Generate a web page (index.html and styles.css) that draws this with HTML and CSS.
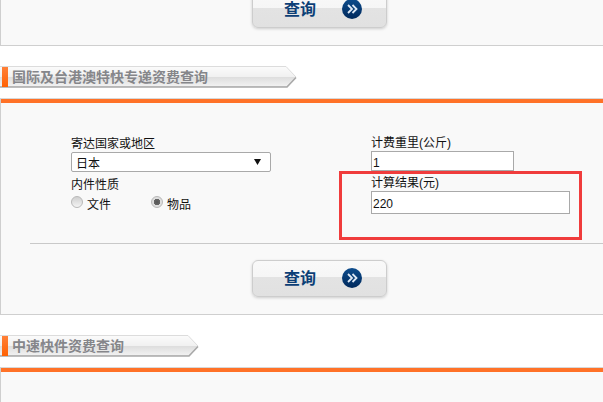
FILE: index.html
```html
<!DOCTYPE html>
<html>
<head>
   <title>资费查询</title>
   <link rel="stylesheet" href="styles.css">
</head>
<body>
   <svg class="defs" width="0" height="0">
       <defs>
           <linearGradient id="ribbon" x1="0" y1="0" x2="0" y2="1">
               <stop offset="0" stop-color="#fbfbfb"/>
               <stop offset="0.5" stop-color="#f1f1f1"/>
               <stop offset="0.55" stop-color="#dedede"/>
               <stop offset="1" stop-color="#f2f2f2"/>
           </linearGradient>
           <linearGradient id="ball" x1="0" y1="0" x2="0" y2="1">
               <stop offset="0" stop-color="#0d4c8c"/>
               <stop offset="1" stop-color="#00295c"/>
           </linearGradient>
       </defs>
   </svg>

   <div class="panel panel-top">
       <button class="query-btn">
           <span class="query-text">查询</span>
           <svg class="query-icon" width="20" height="20" viewBox="0 0 20 20">
               <circle cx="10" cy="10" r="10" fill="url(#ball)"/>
               <path d="M6 6l4 4-4 4M10.500 6l4 4-4 4" fill="none" stroke="#dfe9f5" stroke-width="1.800"/>
           </svg>
       </button>
   </div>

   <div class="section-head">
       <svg class="ribbon" width="297" height="22" viewBox="0 0 297 22">
           <path d="M-1 .5H286L296 11 287 20.500H-1Z" fill="url(#ribbon)" stroke="#dcdcdc"/>
           <path d="M-1 21H287L296 11.500" fill="none" stroke="#a9a9a9" stroke-width="1.600"/>
       </svg>
       <span class="section-mark"></span>
       <h2 class="section-title">国际及台港澳特快专递资费查询</h2>
   </div>

   <div class="panel panel-form">
       <div class="form-row">
           <div class="form-col form-col-left">
               <label class="field-label">寄达国家或地区</label>
               <div class="select-box">
                   <span>日本</span>
                   <svg width="7" height="6" viewBox="0 0 7 6"><path d="M0 0H7L3.500 6Z" fill="#111"/></svg>
               </div>
               <label class="field-label field-label-second">内件性质</label>
               <div class="radio-row">
                   <label class="radio-item"><input type="radio" name="kind" class="radio">文件</label>
                   <label class="radio-item"><input type="radio" name="kind" class="radio" checked>物品</label>
               </div>
           </div>
           <div class="form-col">
               <label class="field-label field-label-tight">计费重里(公斤)</label>
               <input type="text" class="text-input text-input-short" value="1">
               <label class="field-label field-label-result">计算结果(元)</label>
               <input type="text" class="text-input text-input-long" value="220">
           </div>
       </div>
       <div class="form-line"></div>
       <div class="btn-row">
           <button class="query-btn">
               <span class="query-text">查询</span>
               <svg class="query-icon" width="20" height="20" viewBox="0 0 20 20">
                   <circle cx="10" cy="10" r="10" fill="url(#ball)"/>
                   <path d="M6 6l4 4-4 4M10.500 6l4 4-4 4" fill="none" stroke="#dfe9f5" stroke-width="1.800"/>
               </svg>
           </button>
       </div>
       <div class="red-box"></div>
   </div>

   <div class="section-head">
       <svg class="ribbon" width="199" height="22" viewBox="0 0 199 22">
           <path d="M-1 .5H188L198 11 189 20.500H-1Z" fill="url(#ribbon)" stroke="#dcdcdc"/>
           <path d="M-1 21H189L198 11.500" fill="none" stroke="#a9a9a9" stroke-width="1.600"/>
       </svg>
       <span class="section-mark"></span>
       <h2 class="section-title">中速快件资费查询</h2>
   </div>

   <div class="panel panel-last"></div>
</body>
</html>
```

FILE: styles.css
```css
* {
    margin: 0;
    padding: 0;
    box-sizing: border-box;
}

html, body {
    height: 402px;
    overflow: hidden;
}

body {
    font-family: "Liberation Sans", "Noto Sans CJK SC", sans-serif;
    font-size: 12px;
    color: #111;
    background: #fff;
}

.defs {
    display: block;
    height: 0;
}

.panel {
    background: #f9f9f9;
    border-left: 1px solid #cfcfcf;
}

.panel-top {
    height: 46px;
    border-bottom: 1px solid #cfcfcf;
    padding: 0 0 17px 251px;
    display: flex;
    align-items: flex-end;
}

.panel-form {
    position: relative;
    height: 217px;
    border-top: 1px solid #d8d8d8;
    border-bottom: 1px solid #cfcfcf;
}

.panel-form::before,
.panel-last::before {
    content: "";
    display: block;
    height: 4px;
    background: #ff7228;
}

.panel-last {
    height: 36px;
    border-top: 1px solid #d8d8d8;
}

.section-head {
    position: relative;
    height: 22px;
    margin: 20px 0 10px;
    display: flex;
    align-items: center;
}

.ribbon {
    position: absolute;
    left: 0;
    top: 0;
}

.section-mark {
    position: relative;
    width: 6px;
    height: 20px;
    margin: -1px 4px 0 2px;
    background: linear-gradient(#ff8038, #ff6204);
}

.section-title {
    position: relative;
    font-size: 14px;
    font-weight: 700;
    line-height: 22px;
    color: #85868a;
}

.form-row {
    display: flex;
    padding: 33px 0 0 70px;
    height: 140px;
}

.form-col {
    display: flex;
    flex-direction: column;
    align-items: flex-start;
}

.form-col-left {
    width: 300px;
}

.field-label {
    display: block;
    line-height: 16px;
}

.field-label-tight {
    height: 15px;
    line-height: 14px;
}

.field-label-second {
    margin-top: 5px;
}

.field-label-result {
    margin-top: 4px;
}

.select-box {
    width: 200px;
    height: 20px;
    padding: 0 9px 0 4px;
    display: flex;
    align-items: center;
    justify-content: space-between;
    background: #fff;
    border: 1px solid #a9a9a9;
    border-radius: 2px;
}

.radio-row {
    display: flex;
    margin-top: 3px;
}

.radio-item {
    width: 80px;
    display: flex;
    align-items: center;
    gap: 4px;
    line-height: 18px;
}

.radio {
    appearance: none;
    -webkit-appearance: none;
    width: 12px;
    height: 12px;
    margin-bottom: 6px;
    border: 1px solid #b8b8b8;
    border-radius: 50%;
    background: linear-gradient(#cfcfcf, #f4f4f4);
}

.radio:checked {
    background: radial-gradient(circle, #555 0, #666 3px, #dedede 3.500px);
}

.text-input {
    display: block;
    height: 20px;
    padding: 3px 1px 0;
    border: 1px solid #a9a9a9;
    background: #fff;
    font-family: "Liberation Sans", sans-serif;
    font-size: 12px;
    color: #111;
    outline: none;
}

.text-input-short {
    width: 143px;
}

.text-input-long {
    width: 199px;
    height: 23px;
}

.form-line {
    height: 1px;
    margin: 0 0 0 29px;
    background: #c9c9c9;
}

.btn-row {
    padding: 16px 0 0 251px;
}

.query-btn {
    width: 135px;
    height: 37px;
    display: flex;
    align-items: center;
    padding: 0 24px 0 31px;
    justify-content: space-between;
    border: 1px solid #cdcdcd;
    border-radius: 6px;
    background: linear-gradient(#f9f9f9 0, #f6f6f6 45%, #e3e3e3 46%, #e1e1e1 100%);
    box-shadow: 0 1px 3px rgba(0, 0, 0, 0.18);
    font-family: inherit;
    flex-shrink: 0;
}

.query-text {
    margin-bottom: 4px;
    font-size: 16px;
    font-weight: 700;
    color: #0c3f76;
}

.query-icon {
    display: block;
    margin-bottom: 2px;
}

.red-box {
    position: absolute;
    left: 338px;
    top: 72px;
    width: 243px;
    height: 69px;
    border: 3px solid #f03c3c;
}
```
